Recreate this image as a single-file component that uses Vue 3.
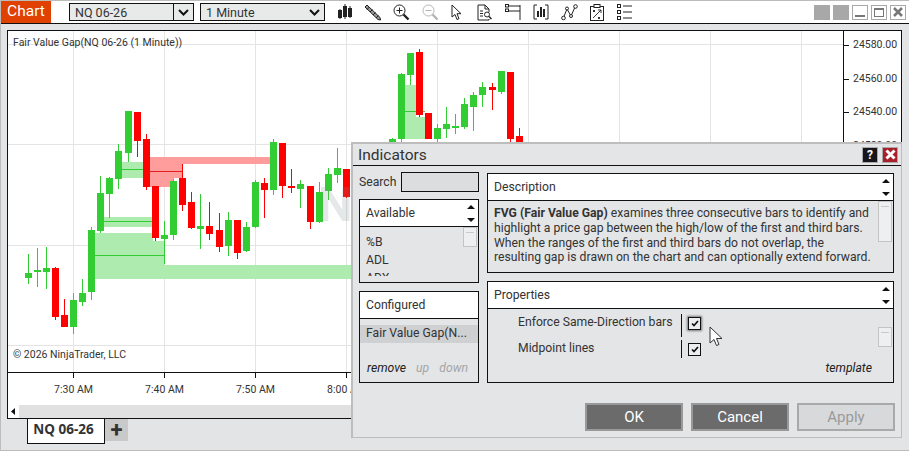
<template>
  <div class="window">
    <div class="toolbar">
      <div class="chart-tab">Chart</div>
      <div class="combo combo-instrument">
        <span class="combo-value">NQ 06-26</span>
        <span class="combo-arrow">
          <svg width="11" height="7" viewBox="0 0 11 7"><path d="M1 1l4.500 4.500L10 1" fill="none" stroke="#111" stroke-width="2"/></svg>
        </span>
      </div>
      <div class="combo combo-interval">
        <span class="combo-value">1 Minute</span>
        <span class="combo-arrow no-line">
          <svg width="11" height="7" viewBox="0 0 11 7"><path d="M1 1l4.500 4.500L10 1" fill="none" stroke="#111" stroke-width="2"/></svg>
        </span>
      </div>
      <div class="tools">
        <svg width="14" height="16" viewBox="0 0 14 16" fill="#222" stroke="#222">
          <path d="M2 5v10M7 0v15M12 2v12" fill="none"/><rect x=".5" y="6.500" width="3" height="7"/><rect x="5.500" y="2.500" width="3" height="10"/><rect x="10.500" y="4.500" width="3" height="8"/>
        </svg>
        <svg width="17" height="17" viewBox="0 0 17 17" fill="none" stroke="#222">
          <path d="M1 3l2-2 13 12.500.5 2.500-2.500-.5z" fill="#999"/><path d="M3 5.500l2.500-2.500M6 8l2.500-2.500M9 11l2.500-2.500M12 14l2.500-2.500" />
        </svg>
        <svg width="17" height="17" viewBox="0 0 17 17" fill="none" stroke="#222">
          <circle cx="6.500" cy="6.500" r="5.500"/><path d="M6.500 3.500v6M3.500 6.500h6"/><path d="M10.500 10.500l5 5" stroke-width="2.400"/>
        </svg>
        <svg width="17" height="17" viewBox="0 0 17 17" fill="none" stroke="#b5b5b5">
          <circle cx="6.500" cy="6.500" r="5.500"/><path d="M3.500 6.500h6"/><path d="M10.500 10.500l5 5" stroke-width="2.400"/>
        </svg>
        <svg width="11" height="17" viewBox="0 0 11 17" fill="#fff" stroke="#222">
          <path d="M1 1v12l3-2.500 2 5 2-.8-2-5h4z"/>
        </svg>
        <svg class="after-pointer" width="15" height="17" viewBox="0 0 15 17" fill="none" stroke="#222">
          <path d="M1 1h7l4 4v3M8 1v4h4M12 15v1H1V1"/><path d="M3 7h3M3 9.500h3M3 12h3"/><circle cx="10" cy="10.500" r="2.500"/><path d="M12 12.500l2.500 2.500" stroke-width="1.500"/>
        </svg>
        <svg width="17" height="17" viewBox="0 0 17 17" fill="none" stroke="#222">
          <rect x="1.500" y=".5" width="3" height="2.500"/><rect x="1.500" y="5" width="3" height="2.500"/><path d="M5 2h11M5 7h11M16 1v15"/>
        </svg>
        <svg width="16" height="16" viewBox="0 0 16 16" fill="none" stroke="#222">
          <path d="M4 1H1v14h3M12 1h3v14h-3"/><path d="M5 7v6M8 3v10M11 5v8" stroke-width="2"/>
        </svg>
        <svg width="17" height="17" viewBox="0 0 17 17" fill="none" stroke="#222">
          <path d="M2.500 13.500L6 5l4 7 4-9"/><circle cx="2.500" cy="14" r="1.800" fill="#fff"/><circle cx="6" cy="4.500" r="1.500" fill="#fff"/><circle cx="10" cy="12" r="1.500" fill="#fff"/><circle cx="14.500" cy="2.500" r="1.800" fill="#fff"/>
        </svg>
        <svg width="14" height="17" viewBox="0 0 14 17" fill="none" stroke="#222">
          <rect x=".5" y="2.500" width="13" height="14"/><rect x="4" y=".5" width="6" height="3" fill="#fff"/><path d="M3 6l2 2M5 6L3 8M8 13l2 2M10 13l-2 2M3 14l8-8M8 6h3v3" stroke-width=".9"/>
        </svg>
        <svg width="17" height="17" viewBox="0 0 17 17" fill="none" stroke="#222">
          <rect x="1.500" y=".5" width="3" height="3"/><rect x="1.500" y="6.500" width="3" height="3"/><rect x="1.500" y="12.500" width="3" height="3"/><path d="M7 2h9M7 8h9M7 14h9"/>
        </svg>
      </div>
      <div class="win-controls">
        <span class="win-btn solid"></span>
        <span class="win-btn solid"></span>
        <span class="win-btn"><i class="min"></i></span>
        <span class="win-btn"><i class="max"></i></span>
        <span class="win-btn close">
          <svg width="10" height="10" viewBox="0 0 10 10"><path d="M1 1l8 8M9 1l-8 8" stroke="#777" stroke-width="2.500"/></svg>
        </span>
      </div>
    </div>

    <div class="chart-frame">
      <div class="chart-row">
        <svg class="plot" width="835" height="341" viewBox="8 31 835 341" shape-rendering="crispEdges">
          <g stroke="#e4e4e4" stroke-width="1.500">
            <line v-for="x in gridX" :key="'v' + x" :x1="x" :x2="x" y1="31" y2="372" />
            <line v-for="y in gridY" :key="'h' + y" x1="8" x2="843" :y1="y" :y2="y" />
          </g>
          <rect v-for="(z, i) in zones" :key="'z' + i" :x="z[0]" :y="z[1]" :width="z[2]" :height="z[3]" :fill="z[4]" />
          <line v-for="(m, i) in midlines" :key="'m' + i" :x1="m[0]" :x2="m[1]" :y1="m[2]" :y2="m[2]" :stroke="m[3]" />
          <g v-for="(c, i) in bars" :key="'c' + i" :fill="c.color">
            <rect :x="c.x" :y="c.wickTop" width="1" :height="c.wickH" />
            <rect :x="c.x - 3" :y="c.top" width="7" :height="c.h" />
          </g>
          <text class="watermark" x="318" y="221">NQ 06-26</text>
        </svg>
        <div class="price-axis">
          <div v-for="p in prices" :key="p" class="price">{{ p }}</div>
        </div>
      </div>
      <div class="chart-label">Fair Value Gap(NQ 06-26 (1 Minute))</div>
      <div class="chart-copy">© 2026 NinjaTrader, LLC</div>
      <div class="time-axis">
        <span v-for="t in times" :key="t" class="time">{{ t }}</span>
      </div>
      <div class="h-scroll">
        <span class="h-left">
          <svg width="5" height="7" viewBox="0 0 5 7"><path d="M4 0v7L0 3.500z" fill="#111"/></svg>
        </span>
      </div>
    </div>

    <div class="tab-row">
      <div class="tab">NQ 06-26</div>
      <div class="tab-add">+</div>
    </div>

    <div class="dialog">
      <div class="dialog-title">
        <span>Indicators</span>
        <span class="help">?</span>
        <span class="close-x">
          <svg width="11" height="11" viewBox="0 0 11 11"><path d="M1.500 1.500l8 8M9.500 1.500l-8 8" stroke="#fff" stroke-width="3"/></svg>
        </span>
      </div>
      <div class="dialog-body">
        <div class="left-col">
          <div class="search">
            <label>Search</label>
            <div class="search-box"></div>
          </div>
          <div class="panel available">
            <div class="panel-head">
              <span>Available</span>
              <span class="updown small"><i class="up"></i><i class="down"></i></span>
            </div>
            <div class="panel-list">
              <div class="list-clip">
                <div>%B</div>
                <div>ADL</div>
                <div>ADX</div>
              </div>
              <span class="thumb thumb-avail"></span>
            </div>
          </div>
          <div class="panel configured">
            <div class="panel-head"><span>Configured</span></div>
            <div class="selected">Fair Value Gap(N...</div>
            <div class="config-actions">
              <span class="act">remove</span>
              <span class="act off">up</span>
              <span class="act off">down</span>
            </div>
          </div>
        </div>
        <div class="right-col">
          <div class="panel description">
            <div class="panel-head">
              <span>Description</span>
              <span class="updown"><i class="up"></i><i class="down"></i></span>
            </div>
            <div class="desc-text">
              <b>FVG (Fair Value Gap)</b> examines three consecutive bars to identify and<br />
              highlight a price gap between the high/low of the first and third bars.<br />
              When the ranges of the first and third bars do not overlap, the<br />
              resulting gap is drawn on the chart and can optionally extend forward.
              <span class="thumb thumb-desc"></span>
            </div>
          </div>
          <div class="panel properties">
            <div class="panel-head">
              <span>Properties</span>
              <span class="updown"><i class="up"></i><i class="down"></i></span>
            </div>
            <div class="props">
              <div class="prop-grid">
                <div class="prop-name">Enforce Same-Direction bars</div>
                <div class="prop-val"><span class="check focus"><svg width="8" height="7" viewBox="0 0 8 7"><path d="M1 3.500l2 2L7 1" fill="none" stroke="#111" stroke-width="1.700"/></svg></span></div>
                <div class="prop-name">Midpoint lines</div>
                <div class="prop-val"><span class="check"><svg width="8" height="7" viewBox="0 0 8 7"><path d="M1 3.500l2 2L7 1" fill="none" stroke="#111" stroke-width="1.700"/></svg></span></div>
              </div>
              <span class="act template">template</span>
              <span class="thumb thumb-props"></span>
              <svg class="cursor" width="14" height="21" viewBox="0 0 14 21">
                <path d="M1 1v16l4-3.500 2.500 6 2.500-1-2.500-6H13z" fill="#fff" stroke="#333"/>
              </svg>
            </div>
          </div>
        </div>
      </div>
      <div class="dialog-buttons">
        <button class="btn">OK</button>
        <button class="btn">Cancel</button>
        <button class="btn disabled">Apply</button>
      </div>
    </div>
  </div>
</template>

<script setup>
const GREEN = '#32cd32'
const RED = '#ff0000'
const ZONE_G = '#aeebae'
const ZONE_R = '#ff9c9c'

// x, wick top, wick bottom, body top, body bottom, colour; page pixels
const raw = [
  [28, 254, 284, 273, 278, 'g'],
  [37, 248, 287, 270, 272, 'g'],
  [46, 247, 289, 268, 272, 'g'],
  [55, 267, 320, 268, 317, 'r'],
  [64, 299, 327, 315, 327, 'r'],
  [73, 293, 334, 300, 327, 'g'],
  [82, 279, 306, 293, 302, 'g'],
  [91, 227, 300, 230, 292, 'g'],
  [100, 176, 233, 193, 231, 'g'],
  [109, 177, 218, 178, 194, 'g'],
  [118, 144, 189, 151, 179, 'g'],
  [128, 111, 162, 111, 153, 'g'],
  [137, 112, 157, 112, 141, 'r'],
  [146, 134, 190, 139, 187, 'r'],
  [155, 186, 241, 186, 238, 'r'],
  [164, 221, 264, 235, 239, 'g'],
  [173, 179, 240, 181, 235, 'g'],
  [182, 164, 211, 178, 205, 'r'],
  [191, 192, 229, 202, 228, 'r'],
  [200, 194, 249, 226, 229, 'g'],
  [209, 202, 240, 226, 234, 'r'],
  [219, 213, 252, 230, 247, 'r'],
  [228, 212, 256, 220, 246, 'g'],
  [237, 220, 259, 220, 253, 'r'],
  [246, 222, 252, 227, 251, 'g'],
  [255, 180, 228, 182, 227, 'g'],
  [264, 178, 218, 183, 190, 'r'],
  [273, 139, 195, 142, 190, 'g'],
  [282, 143, 198, 143, 186, 'r'],
  [291, 169, 193, 186, 188, 'r'],
  [300, 180, 208, 184, 189, 'g'],
  [310, 186, 229, 186, 222, 'r'],
  [319, 182, 223, 192, 222, 'g'],
  [328, 168, 200, 174, 191, 'g'],
  [337, 148, 183, 168, 175, 'g'],
  [346, 169, 198, 169, 197, 'r'],
  [392, 138, 142, 139, 142, 'g'],
  [401, 73, 142, 74, 139, 'g'],
  [410, 53, 85, 53, 75, 'g'],
  [419, 49, 117, 52, 115, 'r'],
  [428, 113, 139, 113, 139, 'r'],
  [437, 124, 142, 128, 139, 'g'],
  [446, 107, 138, 124, 129, 'g'],
  [455, 114, 134, 126, 128, 'g'],
  [464, 98, 129, 104, 127, 'g'],
  [473, 92, 131, 95, 107, 'g'],
  [482, 82, 107, 87, 95, 'g'],
  [492, 83, 110, 87, 90, 'r'],
  [501, 71, 94, 71, 92, 'g'],
  [510, 72, 142, 72, 139, 'r'],
  [519, 128, 142, 136, 142, 'r']
]

const bars = raw.map(([x, wt, wb, t, b, c]) => ({
  x,
  wickTop: wt,
  wickH: wb - wt,
  top: t,
  h: b - t,
  color: c === 'g' ? GREEN : RED
}))

const gridX = [73.5, 164.5, 255.5, 346.5, 437.5, 528.5, 619.5, 710.5, 801.5]
const gridY = [44.5, 144.5, 245.5, 345.5]

const zones = [
  [95, 233, 58, 46, ZONE_G],
  [153, 241, 12, 38, ZONE_G],
  [164, 265, 686, 14, ZONE_G],
  [104, 217, 49, 10, ZONE_G],
  [122, 162, 21, 16, ZONE_G],
  [150, 157, 120, 7, ZONE_R],
  [150, 164, 33, 14, ZONE_R],
  [150, 178, 24, 9, ZONE_R],
  [405, 85, 11, 54, ZONE_G],
  [416, 117, 9, 22, ZONE_G]
]

const midlines = [
  [95, 164, 255, GREEN],
  [104, 153, 221, GREEN],
  [122, 143, 169, GREEN],
  [150, 182, 171, '#e02020'],
  [405, 425, 111, GREEN]
]

const prices = ['24580.00', '24560.00', '24540.00', '24520.00']
const times = ['7:30 AM', '7:40 AM', '7:50 AM', '8:00 AM']
</script>

<style scoped>
.window {
  position: relative;
  width: 909px;
  height: 451px;
  box-sizing: border-box;
  display: flex;
  flex-direction: column;
  overflow: hidden;
  background: #e3e4e6;
  border-top: 1px solid #bcbcbc;
  border-left: 1px solid #bcbcbc;
  border-bottom: 1px solid #bcbcbc;
  font-family: Roboto, sans-serif;
  color: #222;
}

.toolbar {
  flex: none;
  height: 22px;
  display: flex;
  align-items: center;
  background: #fff;
  border-bottom: 1px solid #111;
}

.chart-tab {
  width: 50px;
  height: 22px;
  line-height: 21px;
  text-align: center;
  background: #e04000;
  color: #fff;
  font-size: 15.5px;
  margin-right: 18px;
}

.combo {
  box-sizing: border-box;
  height: 18px;
  display: flex;
  align-items: center;
  border: 1px solid #111;
  background: #e8e9e9;
  font-size: 12.5px;
}

.combo-instrument { width: 125px; margin-right: 6px; }
.combo-interval { width: 125px; margin-right: 13px; }

.combo-value {
  flex: 1;
  padding-left: 5px;
  color: #333;
}

.combo-arrow {
  width: 19px;
  height: 100%;
  display: flex;
  align-items: center;
  justify-content: center;
  border-left: 1px solid #111;
}

.combo-arrow.no-line { border-left: none; }

.tools {
  display: flex;
  align-items: center;
  gap: 12px;
}

.after-pointer { margin-left: 3px; }

.win-controls {
  margin-left: auto;
  margin-right: 3px;
  display: flex;
  gap: 3px;
}

.win-btn {
  box-sizing: border-box;
  width: 16px;
  height: 15px;
  border: 1px solid #a8a8a8;
  display: flex;
  align-items: center;
  justify-content: center;
  position: relative;
}

.win-btn.solid { background: #a8a8a8; }

.min {
  position: absolute;
  left: 2px;
  right: 2px;
  bottom: 2px;
  height: 2px;
  background: #777;
}

.max {
  position: absolute;
  left: 2px;
  right: 2px;
  top: 2px;
  bottom: 2px;
  border: 1px solid #777;
  border-top-width: 2px;
}

.chart-frame {
  flex: none;
  position: relative;
  width: 895px;
  height: 389px;
  box-sizing: border-box;
  margin: 6px 0 0 6px;
  border: 1px solid #111;
  background: #fff;
  display: flex;
  flex-direction: column;
  font-size: 10.5px;
  color: #333;
}

.chart-row {
  flex: none;
  height: 341px;
  display: flex;
  border-bottom: 1px solid #111;
}

.plot {
  flex: none;
  display: block;
}

.watermark {
  font-size: 49px;
  font-weight: 700;
  fill: #7f8a8a;
  fill-opacity: 0.2;
}

.price-axis {
  flex: 1;
  border-left: 1px solid #111;
  padding-top: 6px;
}

.price {
  height: 33.5px;
  line-height: 16px;
  padding-left: 9px;
  position: relative;
}

.price::before {
  content: "";
  position: absolute;
  left: 0;
  top: 8px;
  width: 5px;
  height: 1px;
  background: #111;
}

.chart-label {
  position: absolute;
  left: 5px;
  top: 5px;
}

.chart-copy {
  position: absolute;
  left: 5px;
  top: 317px;
}

.time-axis {
  flex: none;
  height: 32px;
  display: flex;
  padding-left: 20px;
}

.time {
  width: 91px;
  text-align: center;
  padding-top: 10px;
  position: relative;
}

.time::before {
  content: "";
  position: absolute;
  left: 45px;
  top: 0;
  width: 1px;
  height: 5px;
  background: #111;
}

.h-scroll {
  flex: 1;
  background: #e1e1e1;
}

.h-left {
  width: 11px;
  height: 100%;
  display: flex;
  align-items: center;
  justify-content: center;
  background: #fff;
}

.tab-row {
  flex: none;
  display: flex;
  padding-left: 26px;
  margin-top: -1px;
}

.tab {
  box-sizing: border-box;
  width: 78px;
  height: 26px;
  padding-right: 5px;
  background: #fff;
  border: 1px solid #111;
  border-top: 1px solid #fff;
  text-align: center;
  font-family: "Noto Sans", sans-serif;
  font-size: 13.5px;
  font-weight: 700;
  line-height: 21px;
  color: #333;
}

.tab-add {
  width: 23px;
  height: 22px;
  margin-top: 1px;
  background: #c9c9c9;
  text-align: center;
  font-size: 22px;
  font-weight: 700;
  line-height: 21px;
  color: #333;
}

.dialog {
  position: absolute;
  left: 350px;
  top: 141px;
  width: 551px;
  height: 296px;
  box-sizing: border-box;
  background: #e4e5e7;
  border: 2px solid #bdbdbd;
  border-right-width: 1px;
  border-bottom-width: 1px;
  display: flex;
  flex-direction: column;
  font-size: 12.2px;
  color: #333;
}

.dialog-title {
  flex: none;
  box-sizing: border-box;
  height: 22px;
  display: flex;
  align-items: center;
  gap: 4px;
  padding-left: 5px;
  padding-right: 3px;
  border-bottom: 1px solid #111;
  font-size: 15.5px;
}

.dialog-title > span:first-child {
  flex: 1;
}

.help, .close-x {
  box-sizing: border-box;
  width: 16px;
  height: 16px;
  display: flex;
  align-items: center;
  justify-content: center;
  color: #fff;
  font-weight: 700;
  font-size: 12px;
}

.help { background: #16161c; border: 1px solid #aaa; }
.close-x { background: #a8202a; border: 1px solid #aaa; }

.dialog-body {
  flex: none;
  display: flex;
  gap: 8px;
  padding: 6px 0 0 6px;
}

.left-col {
  width: 120px;
  display: flex;
  flex-direction: column;
}

.search {
  height: 20px;
  display: flex;
  align-items: center;
  justify-content: space-between;
  margin-bottom: 7px;
}

.search-box {
  box-sizing: border-box;
  width: 78px;
  height: 20px;
  border: 1px solid #111;
  background: #dcdddf;
}

.right-col {
  width: 407px;
  margin-top: 1px;
  display: flex;
  flex-direction: column;
  gap: 8px;
}

.panel {
  position: relative;
  box-sizing: border-box;
  border: 1px solid #111;
  overflow: hidden;
}

.panel-head {
  box-sizing: border-box;
  height: 27px;
  display: flex;
  align-items: center;
  justify-content: space-between;
  padding-left: 6px;
  background: #fff;
  border-bottom: 1px solid #111;
}

.updown {
  width: 15px;
  height: 100%;
  display: flex;
  flex-direction: column;
  align-items: center;
  justify-content: center;
  gap: 9px;
}

.up, .down {
  width: 0;
  height: 0;
  border-left: 4px solid transparent;
  border-right: 4px solid transparent;
}

.up { border-bottom: 4px solid #111; }
.down { border-top: 4px solid #111; }

.available { height: 84px; }

.panel-list {
  position: relative;
  height: 55px;
  padding: 6px 6px 0;
  box-sizing: border-box;
}

.list-clip {
  height: 43px;
  line-height: 18px;
  overflow: hidden;
}

.thumb {
  position: absolute;
  right: 1px;
  width: 14px;
  box-sizing: border-box;
  background: #eeeff0 linear-gradient(#c9c9c9, #c9c9c9) center 4px / 8px 1px no-repeat;
  border: 1px solid #c4c4c4;
}

.thumb-avail { top: 0; height: 20px; }
.thumb-desc { top: 0; height: 41px; }
.thumb-props { top: 18px; height: 20px; }

.configured {
  height: 92px;
  margin-top: 8px;
}

.selected {
  height: 18px;
  line-height: 17px;
  margin-top: 6px;
  padding-left: 6px;
  background: #cfd0d2;
}

.config-actions {
  display: flex;
  gap: 10px;
  padding: 18px 0 0 7px;
}

.act {
  font-style: italic;
  color: #222;
}

.act.off { color: #a3a5a7; }

.description { height: 100px; }

.desc-text {
  position: relative;
  height: 71px;
  box-sizing: border-box;
  padding: 5px 0 0 6px;
  line-height: 14.8px;
  white-space: nowrap;
}

.properties { height: 102px; }

.props {
  position: relative;
  height: 73px;
}

.prop-grid {
  position: absolute;
  left: 0;
  top: 5px;
  display: grid;
  grid-template-columns: 194px auto;
}

.prop-name {
  height: 23px;
  line-height: 17px;
  padding-left: 30px;
  white-space: nowrap;
  border-right: 1px solid #111;
}

.prop-val {
  height: 23px;
  padding: 3px 0 0 6px;
}

.prop-val:nth-child(4),
.prop-name:nth-child(3) {
  height: 18px;
}

.check {
  box-sizing: border-box;
  width: 13px;
  height: 13px;
  display: flex;
  align-items: center;
  justify-content: center;
  border: 1px solid #111;
  background: #ecedee;
}

.check.focus { box-shadow: 0 0 2px 1px #777; }

.template {
  position: absolute;
  right: 21px;
  top: 52px;
}

.cursor {
  position: absolute;
  left: 221px;
  top: 17px;
}

.dialog-buttons {
  margin-top: auto;
  display: flex;
  justify-content: flex-end;
  gap: 8px;
  padding: 0 6px 6px 0;
}

.btn {
  box-sizing: border-box;
  width: 98px;
  height: 28px;
  border: 2px solid #999;
  background: #6b6b6b;
  color: #fff;
  font-family: Roboto, sans-serif;
  font-size: 15px;
  padding: 0;
}

.btn.disabled {
  background: #d8d9da;
  border-color: #a9a9a9;
  color: #9a9a9a;
}
</style>
